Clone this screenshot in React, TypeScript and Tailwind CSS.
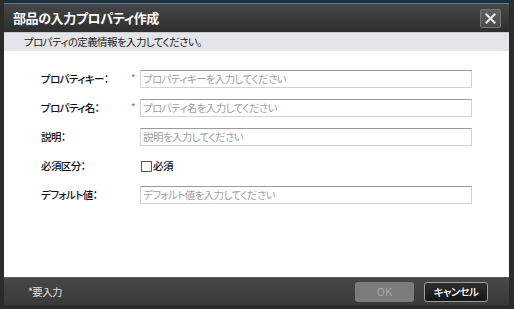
import { useState } from "react";

const FONT = "font-['Noto_Sans_CJK_JP','Noto_Sans',sans-serif] [font-feature-settings:'palt']";
const TXT = "text-[10.5px] tracking-[-0.6px]";

const FIELDS = [
  { key: "key", label: "プロパティキー：", required: true, placeholder: "プロパティキーを入力してください" },
  { key: "name", label: "プロパティ名：", required: true, placeholder: "プロパティ名を入力してください" },
  { key: "desc", label: "説明：", required: false, placeholder: "説明を入力してください" },
  { key: "req", label: "必須区分：", required: false, checkbox: true },
  { key: "def", label: "デフォルト値：", required: false, placeholder: "デフォルト値を入力してください" },
];

export default function App() {
  const [checked, setChecked] = useState(false);

  return (
    <div className={`w-[514px] h-[309px] bg-[#2b2b2b] pt-[3px] pl-[4px] pr-[5px] pb-[4px] flex flex-col ${FONT}`}>
      <div className="h-px bg-[#1e8ad8]" />

      {/* title bar */}
      <div className="h-[28px] flex items-center justify-between pl-[9px] pr-[8px] bg-gradient-to-b from-[#474747] to-[#2e2e2e]">
        <span className="text-[13px] font-bold text-white tracking-[-0.4px]">部品の入力プロパティ作成</span>
        <button className="w-[21px] h-[19px] rounded-[2px] border border-[#767676] bg-gradient-to-b from-[#626262] to-[#4a4a4a] flex items-center justify-center">
          <svg width="11" height="11" viewBox="0 0 11 11">
            <path d="M1.5 1.5 L9.5 9.5 M9.5 1.5 L1.5 9.5" stroke="#e4e4e4" strokeWidth="2.2" strokeLinecap="square" />
          </svg>
        </button>
      </div>

      {/* instruction */}
      <div className={`h-[19px] bg-[#e4e5e8] border-t border-[#c9c9c9] flex items-center pl-[20px] text-[#1a1a1a] ${TXT}`}>
        プロパティの定義情報を入力してください。
      </div>

      {/* body */}
      <div className="flex-1 bg-white pt-[19px] pl-[37px] flex flex-col gap-[11px]">
        {FIELDS.map((f) => (
          <div key={f.key} className="h-[18px] flex items-center">
            <span className={`w-[90px] font-medium text-[#111] ${TXT}`}>{f.label}</span>
            <span className="w-[9px] text-[10px] text-[#c8602a] leading-none -mt-[3px]">{f.required ? "*" : ""}</span>
            {f.checkbox ? (
              <label className={`flex items-center gap-[1px] font-medium text-[#111] ml-[1px] ${TXT}`}>
                <span
                  onClick={() => setChecked(!checked)}
                  className="w-[11px] h-[11px] border border-[#555] bg-white"
                />
                必須
              </label>
            ) : (
              <div className={`w-[332px] h-[18px] border border-[#d2d2d2] border-t-[#9a9a9a] flex items-center px-[2px] text-[#a0a0a0] ${TXT}`}>
                {f.placeholder}
              </div>
            )}
          </div>
        ))}
      </div>

      {/* footer */}
      <div className="h-[28px] bg-gradient-to-b from-[#474747] to-[#3a3a3a] border-t border-[#5a5a5a] flex items-center pl-[24px] pr-[21px]">
        <span className={`text-[#e0e0e0] ${TXT}`}>*要入力</span>
        <button className="ml-auto w-[59px] h-[20px] rounded-[3px] bg-[#7b7b7b] text-[11px] text-[#a9a9a9]">OK</button>
        <button className={`ml-[10px] w-[64px] h-[20px] rounded-[3px] border border-[#a0a0a0] bg-gradient-to-b from-[#2e2e2e] to-[#161616] font-medium text-white ${TXT}`}>
          キャンセル
        </button>
      </div>
    </div>
  );
}
